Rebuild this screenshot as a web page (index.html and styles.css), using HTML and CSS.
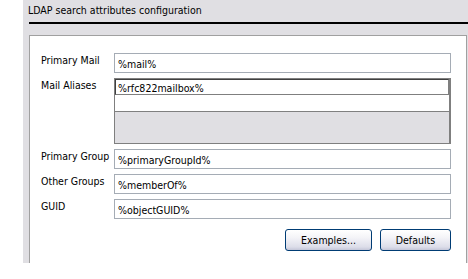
FILE: index.html
```html
<!DOCTYPE html>
<html lang="en">
<head>
  <meta charset="UTF-8">
  <title>LDAP search attributes configuration</title>
  <link rel="stylesheet" href="styles.css">
</head>
<body>

  <div class="ventana">
    <div class="titulo">LDAP search attributes configuration</div>
    <div class="raya"></div>

    <div class="panel">
      <div class="fila">
        <div class="etiqueta">Primary Mail</div>
        <div class="campo">%mail%</div>
      </div>

      <div class="fila">
        <div class="etiqueta">Mail Aliases</div>
        <div class="lista">
          <div class="lista-editar">%rfc822mailbox%</div>
          <div class="lista-fila"></div>
          <div class="lista-vacia"></div>
        </div>
      </div>

      <div class="fila">
        <div class="etiqueta">Primary Group</div>
        <div class="campo">%primaryGroupId%</div>
      </div>

      <div class="fila">
        <div class="etiqueta">Other Groups</div>
        <div class="campo">%memberOf%</div>
      </div>

      <div class="fila">
        <div class="etiqueta">GUID</div>
        <div class="campo">%objectGUID%</div>
      </div>

      <div class="botones">
        <button class="boton boton-ejemplos">Examples...</button>
        <button class="boton boton-defecto">Defaults</button>
      </div>
    </div>
  </div>

</body>
</html>
```

FILE: styles.css
```css
body {
  margin: 0;
  background-color: #ffffff;
  font-family: 'DejaVu Sans Condensed', 'DejaVu Sans', sans-serif;
  font-size: 10.5px;
  color: #000000;
}

.ventana {
  margin-left: 23px;
  width: 445px;
  height: 263px;
  background-color: #e0dfe3;
  display: flex;
  flex-direction: column;
}

.titulo {
  height: 22px;
  padding-left: 5px;
  line-height: 13px;
  padding-top: 4px;
  box-sizing: border-box;
}

.raya {
  margin-left: 6px;
  height: 2px;
  background-color: #000000;
}

.panel {
  margin: 11px 1px 0 6px;
  flex: 1;
  background-color: #ffffff;
  border: 1px solid #a0a0a0;
  border-bottom: none;
  padding: 17px 15px 0 11px;
  display: flex;
  flex-direction: column;
  gap: 5px;
}

.fila {
  display: flex;
}

.etiqueta {
  width: 73px;
  padding-top: 1px;
  line-height: 13px;
}

.campo {
  flex: 1;
  height: 20px;
  box-sizing: border-box;
  border: 1px solid #a5acb5;
  padding: 0 3px;
  line-height: 18px;
  padding-top: 1px;
}

.lista {
  flex: 1;
  height: 66px;
  box-sizing: border-box;
  border: 1px solid #7f7f7f;
  border-right-width: 2px;
  display: flex;
  flex-direction: column;
}

.lista-editar {
  height: 16px;
  box-sizing: border-box;
  border: 1px solid #7f7f7f;
  border-left-color: #404040;
  border-top-color: #404040;
  padding: 0 2px;
  line-height: 14px;
  padding-top: 1px;
}

.lista-fila {
  height: 16px;
  border-bottom: 1px solid #808080;
  background-color: #ffffff;
}

.lista-vacia {
  flex: 1;
  background-color: #e0dfe3;
}

.botones {
  display: flex;
  justify-content: flex-end;
  gap: 8px;
  margin-top: 5px;
}

.boton {
  height: 22px;
  font-family: 'DejaVu Sans Condensed', 'DejaVu Sans', sans-serif;
  font-size: 10.5px;
  color: #000000;
  border: 1px solid #003c74;
  border-radius: 3px;
  background: linear-gradient(#ffffff 0%, #f3f3f7 40%, #dcdde9 85%, #c4c6d8 100%);
  padding: 0;
}

.boton-ejemplos {
  width: 87px;
}

.boton-defecto {
  width: 71px;
}
```
